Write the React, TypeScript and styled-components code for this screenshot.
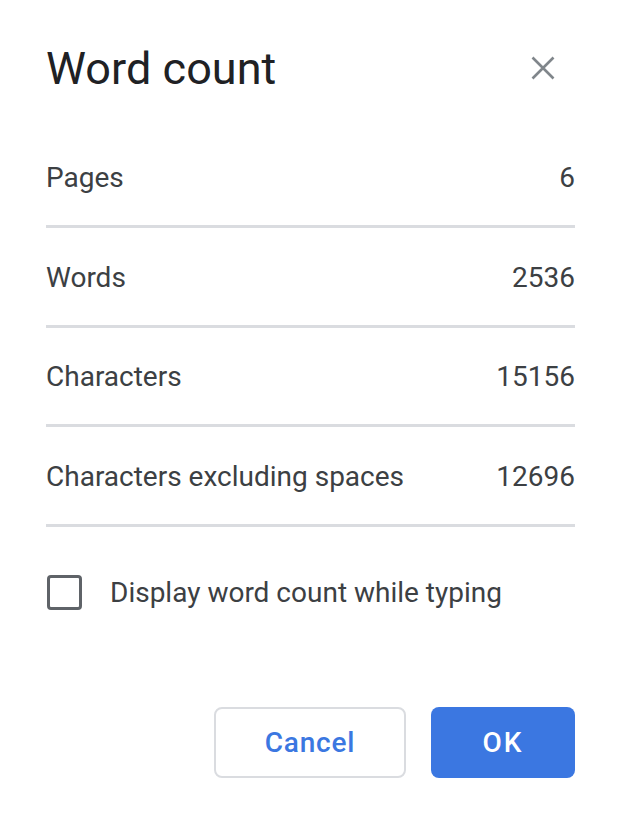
import React from "react";
import styled, { createGlobalStyle } from "styled-components";

const Global = createGlobalStyle`
  html, body { margin: 0; padding: 0; background: #fff; }
  body { font-family: Roboto, "Noto Sans", Arial, sans-serif; -webkit-font-smoothing: antialiased; }
  * { box-sizing: border-box; }
`;

const Dialog = styled.div`
  width: 620px;
  height: 826px;
  background: #fff;
  padding: 0 45px 0 46px;
  display: flex;
  flex-direction: column;
`;

const Header = styled.div`
  height: 128.5px;
  flex-shrink: 0;
  display: flex;
  align-items: center;
  justify-content: space-between;
  padding-top: 8px;
`;

const Title = styled.h1`
  margin: 0;
  font-family: Roboto, "Open Sans", Arial, sans-serif;
  font-weight: 400;
  font-size: 45px;
  letter-spacing: 0.05px;
  color: #202124;
`;

const CloseButton = styled.button`
  width: 40px;
  height: 40px;
  margin-right: 12px;
  border: none;
  background: transparent;
  padding: 0;
  display: flex;
  align-items: center;
  justify-content: center;
  cursor: pointer;
`;

const Row = styled.div`
  height: 99.5px;
  flex-shrink: 0;
  display: flex;
  align-items: center;
  justify-content: space-between;
  border-bottom: 3px solid #dadce0;
  padding-top: 2px;
  font-size: 28px;
  color: #3c4043;
`;

const Label = styled.span``;
const Value = styled.span``;

const CheckRow = styled.label`
  display: flex;
  align-items: center;
  gap: 28px;
  margin-top: 48.5px;
  padding-left: 1px;
  font-size: 28px;
  color: #3c4043;
  cursor: pointer;
`;

const Box = styled.span`
  width: 35px;
  height: 35px;
  flex-shrink: 0;
  border: 3px solid #5f6368;
  border-radius: 4px;
`;

const Footer = styled.div`
  margin-top: 97px;
  display: flex;
  justify-content: flex-end;
  gap: 25px;
`;

const Button = styled.button<{ $primary?: boolean }>`
  height: 71px;
  width: ${(p) => (p.$primary ? "144px" : "192px")};
  border-radius: 8px;
  font-family: Roboto, Arial, sans-serif;
  font-weight: 500;
  font-size: 28px;
  letter-spacing: ${(p) => (p.$primary ? "2px" : "0.8px")};
  cursor: pointer;
  border: ${(p) => (p.$primary ? "none" : "2px solid #dadce0")};
  background: ${(p) => (p.$primary ? "#3b77e1" : "#fff")};
  color: ${(p) => (p.$primary ? "#fff" : "#3b77e1")};
`;

const rows = [
  ["Pages", "6"],
  ["Words", "2536"],
  ["Characters", "15156"],
  ["Characters excluding spaces", "12696"],
];

export default function App() {
  return (
    <>
      <Global />
      <Dialog>
        <Header>
          <Title>Word count</Title>
          <CloseButton aria-label="Close">
            <svg width="24" height="24" viewBox="0 0 24 24">
              <path d="M1.5 1.5 L22.5 22.5 M22.5 1.5 L1.5 22.5" stroke="#80868b" strokeWidth="2.6" />
            </svg>
          </CloseButton>
        </Header>
        {rows.map(([l, v]) => (
          <Row key={l}>
            <Label>{l}</Label>
            <Value>{v}</Value>
          </Row>
        ))}
        <CheckRow>
          <Box />
          Display word count while typing
        </CheckRow>
        <Footer>
          <Button>Cancel</Button>
          <Button $primary>OK</Button>
        </Footer>
      </Dialog>
    </>
  );
}
